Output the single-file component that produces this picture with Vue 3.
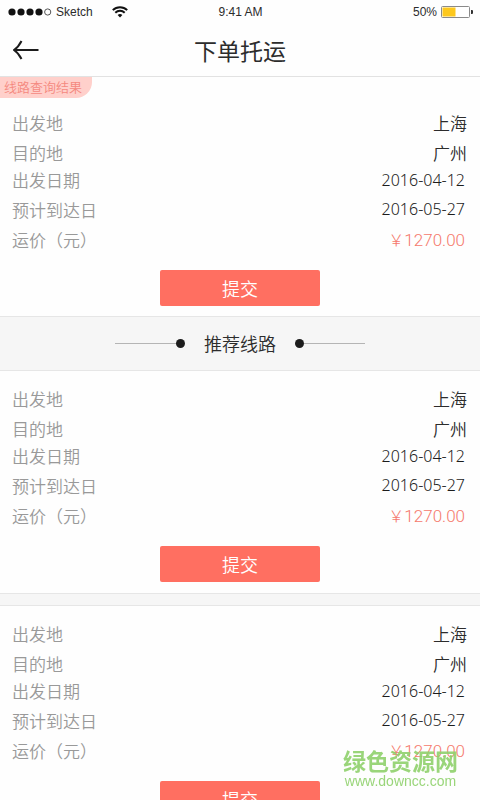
<script setup>
const route = {
  from: '上海',
  to: '广州',
  depart: '2016-04-12',
  arrive: '2016-05-27',
  price: '1270.00',
}

const sections = [
  { id: 1, kind: 'result', route },
  { id: 2, kind: 'recommended', route },
  { id: 3, kind: 'more', route },
]
</script>

<template>
  <div class="page">
    <div class="status">
      <div class="carrier">
        <svg class="signal" width="44" height="8" viewBox="0 0 44 8" aria-hidden="true">
          <circle cx="4" cy="4" r="3.6" />
          <circle cx="13" cy="4" r="3.6" />
          <circle cx="22" cy="4" r="3.6" />
          <circle cx="31" cy="4" r="3.6" />
          <circle class="hollow" cx="39.7" cy="4" r="3.1" />
        </svg>
        <span>Sketch</span>
        <svg class="wifi" width="16" height="12" viewBox="0 0 16 12" aria-hidden="true">
          <path d="M0.8 4.1a10.4 10.4 0 0 1 14.4 0" />
          <path d="M3.3 6.7a6.8 6.8 0 0 1 9.4 0" />
          <path class="core" d="M5.6 9a3.6 3.6 0 0 1 4.8 0L8 11.5z" />
        </svg>
      </div>
      <span>9:41 AM</span>
      <div class="power">
        <span>50%</span>
        <svg width="32" height="12" viewBox="0 0 32 12" aria-hidden="true">
          <rect x="0.5" y="0.5" width="28" height="11" rx="1" fill="#fff" stroke="#8a8a8a" />
          <rect x="1.5" y="1.5" width="13" height="9" fill="#fdc81d" />
          <path d="M30 4h1a1 1 0 0 1 1 1v2a1 1 0 0 1-1 1h-1z" fill="#333" />
        </svg>
      </div>
    </div>

    <header class="nav">
      <button class="back" type="button" aria-label="返回">
        <svg width="26" height="20" viewBox="0 0 26 20" aria-hidden="true">
          <path d="M25.5 10H1M8.5 1Q5.5 7 1 10Q5.5 13 8.5 19" />
        </svg>
      </button>
      <h1>下单托运</h1>
    </header>

    <main>
      <template v-for="s in sections" :key="s.id">
        <div v-if="s.kind === 'recommended'" class="divider">
          <i class="rule left"></i>
          <h2>推荐线路</h2>
          <i class="rule right"></i>
        </div>
        <div v-if="s.kind === 'more'" class="gap"></div>
        <section class="card">
          <div v-if="s.kind === 'result'" class="tag">线路查询结果</div>
          <dl>
            <div class="row"><dt>出发地</dt><dd>{{ s.route.from }}</dd></div>
            <div class="row"><dt>目的地</dt><dd>{{ s.route.to }}</dd></div>
            <div class="row short"><dt>出发日期</dt><dd class="date">{{ s.route.depart }}</dd></div>
            <div class="row"><dt>预计到达日</dt><dd class="date">{{ s.route.arrive }}</dd></div>
            <div class="row"><dt>运价（元）</dt><dd class="price"><span class="yen">￥</span>{{ s.route.price }}</dd></div>
          </dl>
          <button class="submit" type="button">提交</button>
        </section>
      </template>
    </main>

    <aside class="mark">
      <strong>绿色资源网</strong>
      <span>www.downcc.com</span>
    </aside>
  </div>
</template>

<style>
body {
  margin: 0;
  background: #fff;
}
</style>

<style scoped>
.page {
  min-height: 100vh;
  background: #fefefe;
  color: #2c2c2c;
  font-family: "Noto Sans CJK SC", sans-serif;
}
.status {
  display: grid;
  grid-template-columns: 1fr auto 1fr;
  align-items: center;
  height: 24px;
  padding: 0 7px 0 8px;
  font-family: "Liberation Sans", sans-serif;
  font-size: 12px;
}
.carrier,
.power {
  display: flex;
  align-items: center;
}
.signal {
  margin-right: 4px;
  fill: #111;
}
.signal .hollow {
  fill: none;
  stroke: #555;
}
.wifi {
  margin-left: 19px;
  fill: none;
  stroke: #111;
  stroke-width: 2;
}
.wifi .core {
  fill: #111;
  stroke: none;
}
.power {
  justify-content: flex-end;
  gap: 4px;
}
.nav {
  display: grid;
  grid-template-columns: 1fr auto 1fr;
  align-items: center;
  height: 52px;
  padding: 0 13px;
  border-bottom: 1px solid #e2e2e2;
}
.back {
  justify-self: start;
  display: flex;
  padding: 0;
  border: 0;
  background: none;
}
.back svg {
  fill: none;
  stroke: #1c1c1c;
  stroke-width: 2;
}
h1 {
  margin: 0;
  font-size: 23px;
  font-weight: 400;
  line-height: 30px;
}
.card {
  display: flex;
  flex-direction: column;
  padding: 13px 0 11px;
}
.card:first-child {
  padding: 0 0 10px;
}
.tag {
  align-self: flex-start;
  margin-bottom: 10px;
  padding: 0 10px 2px 4px;
  border-radius: 0 0 16px 0;
  background: #ffd0cb;
  color: #f5897f;
  font-size: 13px;
  font-weight: 350;
  line-height: 19px;
}
dl {
  margin: 0;
  padding: 0 13px 0 12px;
}
.row {
  display: flex;
  justify-content: space-between;
  height: 30px;
  font-size: 17px;
  font-weight: 350;
  line-height: 29px;
}
.row.short {
  height: 27px;
  line-height: 24px;
}
dt {
  color: #999;
}
dd {
  margin: 0;
}
.date {
  padding-right: 2px;
  color: #1c1c1c;
  font-family: "Noto Sans", sans-serif;
  font-size: 16px;
  font-weight: 350;
}
.price {
  padding-right: 2px;
  color: #f5796c;
  font-family: Roboto, sans-serif;
  font-weight: 300;
}
.yen {
  font-family: "Noto Sans CJK SC", sans-serif;
  font-size: 16px;
}
.submit {
  align-self: center;
  width: 33.333%;
  height: 36px;
  margin-top: 15px;
  padding: 0;
  border: 0;
  border-radius: 2px;
  background: #ff6f61;
  color: #fff;
  font-family: "Noto Sans CJK SC", sans-serif;
  font-size: 18px;
  font-weight: 350;
  line-height: 34px;
}
.divider,
.gap {
  border: solid #e6e6e6;
  border-width: 1px 0;
  background: #f6f6f6;
}
.divider {
  display: flex;
  align-items: center;
  justify-content: center;
  gap: 19px;
  height: 53px;
}
.gap {
  height: 11px;
}
h2 {
  margin: 0;
  padding-bottom: 2px;
  font-size: 18px;
  font-weight: 350;
  line-height: 26px;
}
.rule {
  display: flex;
  align-items: center;
  width: 70px;
}
.rule::before {
  content: "";
  flex: 1;
  height: 1px;
  background: #b5b5b5;
}
.rule::after {
  content: "";
  width: 9px;
  height: 9px;
  border-radius: 50%;
  background: #1c1c1c;
}
.rule.right {
  flex-direction: row-reverse;
}
.mark {
  position: fixed;
  right: 22px;
  bottom: 10px;
  display: flex;
  flex-direction: column;
  align-items: center;
  color: #8fd16c;
  opacity: 0.9;
}
.mark strong {
  font-size: 23px;
  font-weight: 700;
  line-height: 24px;
}
.mark span {
  font-family: "Liberation Sans", sans-serif;
  font-size: 14px;
  line-height: 18px;
}
</style>
